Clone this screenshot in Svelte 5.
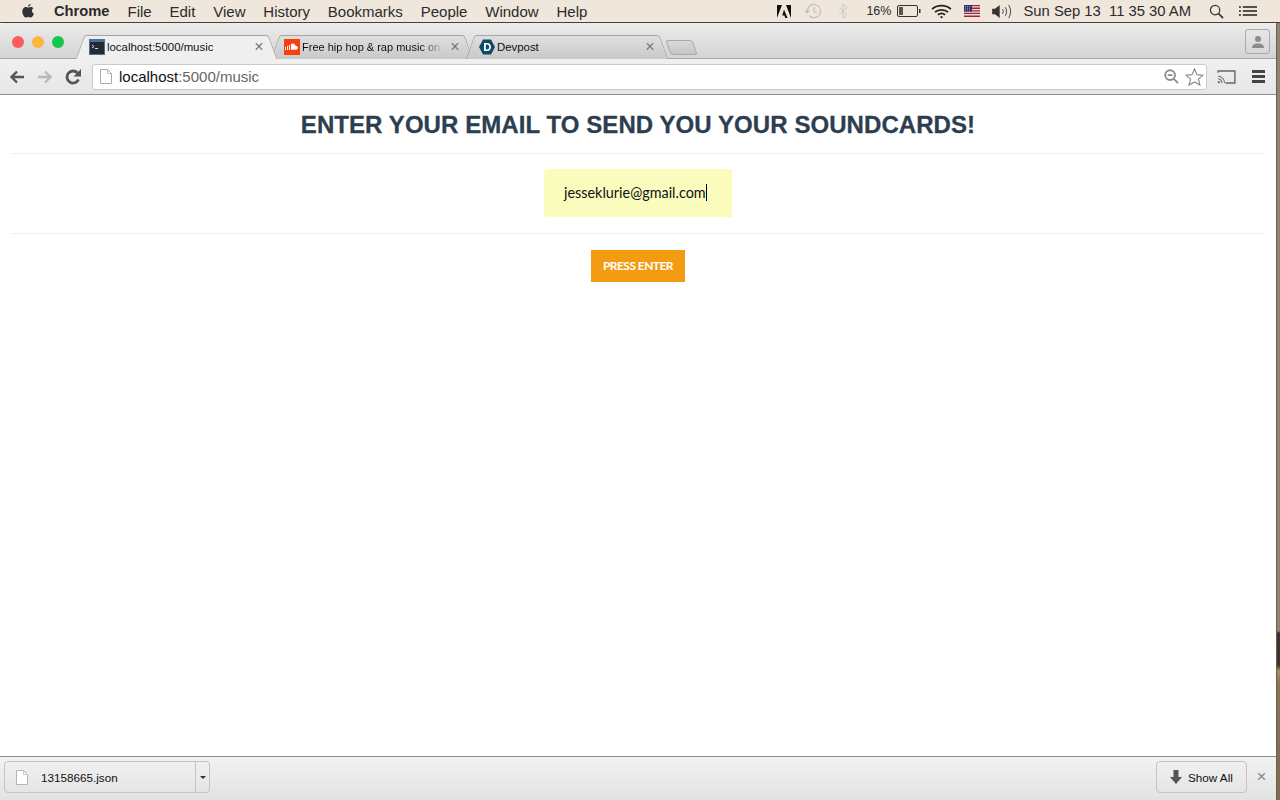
<script>
  const menus = ['File', 'Edit', 'View', 'History', 'Bookmarks', 'People', 'Window', 'Help'];
  let email = 'jesseklurie@gmail.com';
</script>

<div class="screen">
  <header class="menubar">
    <svg class="apple" viewBox="0 0 16 18" width="14" height="16">
      <path fill="#333" d="M11 1c.1 1.300-1.100 3-2.900 3C8 2.500 9.400 1.100 11 1zM8.200 5c.8 0 1.600-.7 3-.7 1.200 0 2.300.6 3 1.600-2.500 1.500-2.100 5 .6 6.100-.7 1.800-2.200 4.500-3.700 4.500-1 0-1.500-.6-2.700-.6s-1.800.6-2.700.6C3.900 16.500 1.500 12.700 1.500 9.500c0-3.200 2-5.100 4-5.100 1.200 0 2 .6 2.700.6z" />
    </svg>
    <b class="menu app-name">Chrome</b>
    {#each menus as item}
      <span class="menu">{item}</span>
    {/each}
    <div class="status">
      <svg class="s-adobe" viewBox="0 0 14 13" width="14" height="13">
        <path fill="#111" d="M0 0h5L0 13zM9 0h5v13zM7 4.500L10.500 13H8.300L7.400 10.500H5.200z" />
      </svg>
      <svg class="s-clock" viewBox="0 0 20 18" width="19" height="18" fill="none" stroke="#c4bdb6" stroke-width="1.200">
        <path d="M3.500 9a7 7 0 1 1 2 5" />
        <path d="M10.500 5v4.500l3 1.500" />
        <path fill="#c4bdb6" stroke="none" d="M0.500 8.500h6l-3 3z" />
      </svg>
      <svg class="s-bt" viewBox="0 0 10 16" width="10" height="16" fill="none" stroke="#cfc8c1" stroke-width="1">
        <path d="M1 4.500l8 7-4 3.500V1l4 3.500-8 7" />
      </svg>
      <span class="s-pct">16%</span>
      <svg class="s-batt" viewBox="0 0 24 12" width="24" height="12">
        <rect x=".5" y=".5" width="20" height="11" rx="1.500" fill="none" stroke="#333" />
        <rect x="2" y="2" width="4" height="8" fill="#555" />
        <rect x="22" y="4" width="1.500" height="4" fill="#333" />
      </svg>
      <svg class="s-wifi" viewBox="0 0 22 16" width="21" height="15" fill="none" stroke="#222" stroke-width="2">
        <path d="M1 5.500c5.500-5 14.500-5 20 0" />
        <path d="M4 8.700c3.800-3.300 10.200-3.300 14 0" />
        <path d="M7.200 11.500c2.200-1.700 5.400-1.700 7.600 0" />
        <circle cx="11" cy="14" r="1.200" fill="#222" stroke="none" />
      </svg>
      <svg class="s-flag" viewBox="0 0 16 12" width="16" height="12">
        <rect width="16" height="12" fill="#efe4e4" />
        <path fill="#9c2433" d="M0 0h16v1.300H0zM0 2.600h16v1.300H0zM0 5.200h16v1.300H0zM0 7.800h16v1.300H0zM0 10.400h16V12H0z" />
        <rect width="8" height="6.500" fill="#2e3168" />
        <path stroke="#c9cbe0" stroke-width=".7" stroke-dasharray="1 1" d="M1 1.500h6M1 3.200h6M1 5h6" />
      </svg>
      <svg class="s-vol" viewBox="0 0 22 16" width="21" height="15" fill="none" stroke="#333" stroke-width="1">
        <path fill="#333" stroke="none" d="M0 5h3l5-4v14l-5-4H0z" />
        <path d="M11 5.500c1 1.500 1 3.500 0 5" />
        <path d="M14 3.500c1.800 2.700 1.800 6.300 0 9" />
        <path d="M17.500 1c2.800 4.200 2.800 9.800 0 14" />
      </svg>
      <span class="s-clocktext">Sun Sep 13&nbsp; 11 35 30 AM</span>
      <svg class="s-search" viewBox="0 0 16 16" width="15" height="15" fill="none" stroke="#333" stroke-width="1.300">
        <circle cx="6.500" cy="6.500" r="5" />
        <path d="M10.200 10.200L15 15" stroke-width="1.700" />
      </svg>
      <svg class="s-list" viewBox="0 0 19 12" width="18" height="12" fill="#222">
        <path d="M0 1h2v1.500H0zM4 1h15v1.500H4zM0 5.200h2v1.500H0zM4 5.200h15v1.500H4zM0 9.500h2V11H0zM4 9.500h15V11H4z" />
      </svg>
    </div>
  </header>

  <div class="desk">
    <div class="window">
      <div class="tabstrip">
        <div class="lights">
          <i class="light red"></i>
          <i class="light yellow"></i>
          <i class="light green"></i>
        </div>
        <div class="tab active tab-one">
          <svg class="fav" viewBox="0 0 16 16" width="16" height="16">
            <rect width="16" height="16" fill="#4e6f9e" />
            <rect x="1" y="3" width="14" height="12" fill="#222a33" />
            <path d="M3 6l2 1.500L3 9" stroke="#ddd" fill="none" />
            <path d="M6 9.500h3" stroke="#ddd" />
          </svg>
          <span class="tab-title">localhost:5000/music</span>
          <span class="tab-x">×</span>
        </div>
        <div class="tab tab-two">
          <svg class="fav" viewBox="0 0 16 16" width="16" height="16">
            <rect width="16" height="16" fill="#f8400c" />
            <path fill="#fff" d="M7 5.200c.5-.4 1-.6 1.700-.6 1.500 0 2.700 1 3 2.400 1.200-.3 2.300.6 2.300 1.800 0 1.100-.9 1.900-2 1.900H7zM5 6h1v5H5zM3 7h1v4H3zM1 8h1v3H1z" />
          </svg>
          <span class="tab-title fade">Free hip hop &amp; rap music on</span>
          <span class="tab-x">×</span>
        </div>
        <div class="tab tab-three">
          <svg class="fav" viewBox="0 0 16 16" width="16" height="16">
            <path fill="#0f4a63" d="M4 .5h8L16 8l-4 7.500H4L0 8z" />
            <path fill="#fff" fill-rule="evenodd" d="M5 4h3.200c2.500 0 3.800 1.700 3.800 4s-1.300 4-3.800 4H5zM6.800 5.600v4.800h1.300c1.400 0 2.100-1 2.100-2.400s-.7-2.400-2.100-2.400z" />
          </svg>
          <span class="tab-title">Devpost</span>
          <span class="tab-x">×</span>
        </div>
        <div class="new-tab"></div>
        <div class="profile">
          <svg viewBox="0 0 14 12" width="14" height="12" fill="#8c8c8c">
            <circle cx="7" cy="3" r="3" />
            <path d="M1 12c0-3.200 2.500-4.500 6-4.500s6 1.300 6 4.500z" />
          </svg>
        </div>
      </div>

      <div class="toolbar">
        <svg class="nav" viewBox="0 0 16 14" width="16" height="14" fill="none" stroke="#555" stroke-width="2.400">
          <path d="M15 7H3M8 1.500L2.500 7 8 12.500" />
        </svg>
        <svg class="nav" viewBox="0 0 16 14" width="16" height="14" fill="none" stroke="#b9b9b9" stroke-width="2.400">
          <path d="M1 7h12M8 1.500L13.500 7 8 12.500" />
        </svg>
        <svg class="nav" viewBox="0 0 16 16" width="16" height="16" fill="none" stroke="#555" stroke-width="2.800">
          <path d="M13.500 10.500A6 6 0 1 1 12.500 4" />
          <path fill="#555" stroke="none" d="M8.500 7.500H16V0z" />
        </svg>
        <div class="omnibox">
          <svg class="page-icon" viewBox="0 0 12 15" width="12" height="15">
            <path fill="#fff" stroke="#aaa" d="M.5.500h7l4 4v10H.500z" />
            <path fill="none" stroke="#bbb" d="M7.500.500v4h4" />
          </svg>
          <span class="url"><span class="host">localhost</span>:5000/music</span>
          <svg class="zoom-out" viewBox="0 0 16 16" width="15" height="15" fill="none" stroke="#8d8d8d" stroke-width="2">
            <circle cx="6.500" cy="6.500" r="5.200" />
            <path d="M4 6.500h5M10.500 10.500L15 15" />
          </svg>
          <svg class="star" viewBox="0 0 20 19" width="19" height="18" fill="#fff" stroke="#8a8a8a" stroke-width="1.200">
            <path d="M10 1l2.700 6 6.300.6-4.800 4.200 1.500 6.200L10 14.800 4.300 18l1.500-6.200L1 7.600 7.300 7z" />
          </svg>
        </div>
        <svg class="cast" viewBox="0 0 20 15" width="19" height="14" fill="none" stroke="#666" stroke-width="1.500">
          <path d="M1 3V1h18v13H9" />
          <path d="M1 6.500a7.500 7.500 0 0 1 7 7.500M1 9.500a4.500 4.500 0 0 1 4 4.500" stroke="#777" stroke-width="1.200" />
          <circle cx="1.800" cy="13" r="1.200" fill="#666" stroke="none" />
        </svg>
        <div class="hamburger"><i></i><i></i><i></i></div>
      </div>

      <main class="page">
        <h1>ENTER YOUR EMAIL TO SEND YOU YOUR SOUNDCARDS!</h1>
        <hr />
        <div class="field">
          <span class="email">{email}<span class="caret"></span></span>
        </div>
        <hr />
        <button class="enter">PRESS ENTER</button>
      </main>

      <footer class="downloads">
        <div class="dl-item">
          <div class="dl-main">
            <svg viewBox="0 0 12 15" width="12" height="15">
              <path fill="#fff" stroke="#b5b5b5" d="M.5.500h7l4 4v10H.500z" />
              <path fill="none" stroke="#ccc" d="M7.500.500v4h4" />
            </svg>
            <span class="dl-name">13158665.json</span>
          </div>
          <div class="dl-menu"><i class="arrow"></i></div>
        </div>
        <div class="show-all">
          <svg viewBox="0 0 12 14" width="12" height="14"><path fill="#555" d="M3.500 0h5v7H12l-6 7-6-7h3.500z" /></svg>
          <span>Show All</span>
        </div>
        <span class="dl-close">×</span>
      </footer>
    </div>
    <div class="wallpaper"></div>
  </div>
</div>

<style>
  :global(body) {
    background: #fff;
  }

  .screen {
    width: 1280px;
    height: 800px;
    display: flex;
    flex-direction: column;
    overflow: hidden;
    font-family: "Liberation Sans", Arial, sans-serif;
  }

  /* mac menu bar */
  .menubar {
    height: 22px;
    flex: none;
    display: flex;
    align-items: center;
    background: #efe6dc;
    border-bottom: 1px solid #4a4038;
    color: #2b2b2b;
    font-size: 15px;
  }
  .apple {
    margin-left: 21px;
    margin-right: 19px;
  }
  .menu {
    margin-right: 17.85px;
  }
  .app-name {
    font-size: 14.7px;
    margin-right: 18px;
  }
  .status {
    margin-left: auto;
    display: flex;
    align-items: center;
  }
  .s-adobe { margin-right: 13px; }
  .s-clock { margin-right: 15px; }
  .s-bt { margin-right: 18px; }
  .s-pct { font-size: 12.5px; margin-right: 6px; }
  .s-batt { margin-right: 10px; }
  .s-wifi { margin-right: 12px; }
  .s-flag { margin-right: 12px; }
  .s-vol { margin-right: 10px; }
  .s-clocktext { font-size: 14.8px; margin-right: 18px; }
  .s-search { margin-right: 15px; }
  .s-list { margin-right: 23px; }

  .desk {
    flex: 1;
    display: flex;
    min-height: 0;
  }
  .window {
    width: 1276px;
    flex: none;
    display: flex;
    flex-direction: column;
    border-right: 1px solid #6b5f50;
    box-sizing: content-box;
  }
  /* desktop showing past the window edge */
  .wallpaper {
    flex: 1;
    background: linear-gradient(#8f8373 0, #8f8373 608px, #3a3038 610px, #3f3329 642px, #a89060 648px, #8a7556 660px, #7d6b50 777px);
  }

  /* tab strip */
  .tabstrip {
    height: 35px;
    flex: none;
    display: flex;
    align-items: flex-end;
    background: linear-gradient(#ececec, #d3d3d3);
    border-bottom: 1px solid #a8a8a8;
    border-radius: 4px 4px 0 0;
  }
  .lights {
    display: flex;
    gap: 8px;
    align-self: flex-start;
    margin: 13px 0 0 12px;
    width: 68px;
    flex: none;
  }
  .light {
    width: 12px;
    height: 12px;
    border-radius: 50%;
  }
  .red { background: #fb5a5e; }
  .yellow { background: #fdb53f; }
  .green { background: #12c84a; }

  .tab {
    position: relative;
    height: 24px;
    display: flex;
    align-items: center;
    font-size: 11.4px;
    color: #111;
    margin-bottom: -1px;
    padding: 0 8px 0 9px;
    box-sizing: border-box;
    z-index: 1;
  }
  .tab::before,
  .tab::after {
    content: "";
    position: absolute;
    top: 0;
    bottom: 0;
    width: 55%;
    z-index: -1;
    background: linear-gradient(#dfdfdf, #c9c9c9);
    border-top: 1px solid #a5a5a5;
    box-sizing: border-box;
  }
  .tab::before {
    left: 0;
    transform: skewX(-20deg);
    border-left: 1px solid #a5a5a5;
    border-radius: 3px 0 0 0;
  }
  .tab::after {
    right: 0;
    transform: skewX(20deg);
    border-right: 1px solid #a5a5a5;
    border-radius: 0 3px 0 0;
  }
  .tab.active {
    z-index: 2;
  }
  .tab.active::before,
  .tab.active::after {
    background: #efefef;
  }
  .tab-one { width: 193px; }
  .tab-two { width: 194px; margin-left: 2px; }
  .tab-three { width: 194px; margin-left: 1px; }
  .fav {
    flex: none;
    margin-right: 2px;
  }
  .tab-title {
    flex: 1;
    white-space: nowrap;
    overflow: hidden;
  }
  .fade {
    font-size: 11px;
    -webkit-mask-image: linear-gradient(90deg, #000 85%, transparent);
    mask-image: linear-gradient(90deg, #000 85%, transparent);
  }
  .tab-x {
    flex: none;
    width: 12px;
    text-align: center;
    font-size: 16px;
    color: #777;
    margin-left: 6px;
  }
  .new-tab {
    width: 27px;
    height: 15px;
    margin: 0 0 3px 4px;
    transform: skewX(20deg);
    background: linear-gradient(#d9d9d9, #c6c6c6);
    border: 1px solid #a8a8a8;
    border-radius: 3px;
    box-sizing: border-box;
  }
  .profile {
    margin-left: auto;
    margin-right: 6px;
    align-self: flex-start;
    margin-top: 6px;
    width: 25px;
    height: 25px;
    box-sizing: border-box;
    border: 1px solid #aaa;
    border-radius: 3px;
    display: flex;
    align-items: center;
    justify-content: center;
  }

  /* address bar */
  .toolbar {
    flex: none;
    display: flex;
    align-items: center;
    background: linear-gradient(#f0f0f0, #e6e6e6);
    border-bottom: 1px solid #8e8e8e;
    padding-left: 9px;
    gap: 12px;
    box-sizing: border-box;
    height: 36px;
  }
  .omnibox {
    width: 1115px;
    height: 26px;
    margin-left: -1px;
    display: flex;
    align-items: center;
    background: #fff;
    border: 1px solid #c9c9c9;
    border-radius: 3px;
    box-sizing: border-box;
    padding: 0 2px 0 7px;
  }
  .url {
    margin-left: 7px;
    flex: 1;
    font-size: 15px;
    color: #666;
  }
  .host {
    color: #111;
  }
  .zoom-out { margin-right: 6px; }
  .cast { margin-left: -2px; }
  .hamburger {
    display: flex;
    flex-direction: column;
    gap: 2px;
    margin-left: 4px;
  }
  .hamburger i {
    display: block;
    width: 13px;
    height: 3px;
    background: #444;
  }

  /* the page itself */
  .page {
    flex: 1;
    background: #fff;
    padding: 0 11px;
    display: flex;
    flex-direction: column;
    align-items: center;
    min-height: 0;
  }
  h1 {
    margin: 15px 0 0;
    height: 43px;
    font-size: 24px;
    line-height: 30px;
    font-weight: 700;
    letter-spacing: 0.07px;
    color: #2c3e50;
    white-space: nowrap;
    -webkit-text-stroke: 0.3px #2c3e50;
  }
  hr {
    width: 100%;
    margin: 0;
    border: 0;
    border-top: 1px solid #eeeeee;
    flex: none;
  }
  .field {
    width: 188px;
    height: 48px;
    margin: 15px 0 16px;
    flex: none;
    box-sizing: border-box;
    padding: 0 0 2px 20px;
    display: flex;
    align-items: center;
    background: #fafcbe;
    border-radius: 4px 0 0 4px;
  }
  .email {
    font-family: Lato, sans-serif;
    font-size: 14.4px;
    color: #111;
    display: flex;
    align-items: center;
    white-space: nowrap;
  }
  .caret {
    display: block;
    width: 1px;
    height: 17px;
    background: #000;
  }
  .enter {
    width: 94px;
    height: 32px;
    margin-top: 16px;
    flex: none;
    padding: 0 0 2px;
    border: 0;
    background: #f39c12;
    color: #fff;
    font-family: Lato, sans-serif;
    font-size: 12px;
    font-weight: 700;
    letter-spacing: -0.55px;
  }

  /* download shelf */
  .downloads {
    height: 44px;
    flex: none;
    display: flex;
    align-items: center;
    box-sizing: border-box;
    background: linear-gradient(#f2f2f2, #e2e2e2);
    border-top: 1px solid #8e8e8e;
    padding: 0 0 3px 4px;
    font-size: 11.7px;
    color: #111;
  }
  .dl-item {
    width: 206px;
    height: 32px;
    display: flex;
    box-sizing: border-box;
    border: 1px solid #c4c4c4;
    border-radius: 4px;
  }
  .dl-main {
    flex: 1;
    display: flex;
    align-items: center;
    padding-left: 11px;
  }
  .dl-name {
    margin-left: 13px;
  }
  .dl-menu {
    width: 13px;
    border-left: 1px solid #c4c4c4;
    display: flex;
    align-items: center;
    justify-content: center;
  }
  .arrow {
    width: 0;
    height: 0;
    border: 3px solid transparent;
    border-top: 3px solid #333;
    border-bottom: 0;
  }
  .show-all {
    margin-left: auto;
    width: 91px;
    height: 32px;
    box-sizing: border-box;
    padding-left: 13px;
    display: flex;
    align-items: center;
    gap: 6px;
    border: 1px solid #c4c4c4;
    border-radius: 4px;
  }
  .dl-close {
    width: 29px;
    text-align: center;
    font-size: 17px;
    color: #888;
  }
</style>
